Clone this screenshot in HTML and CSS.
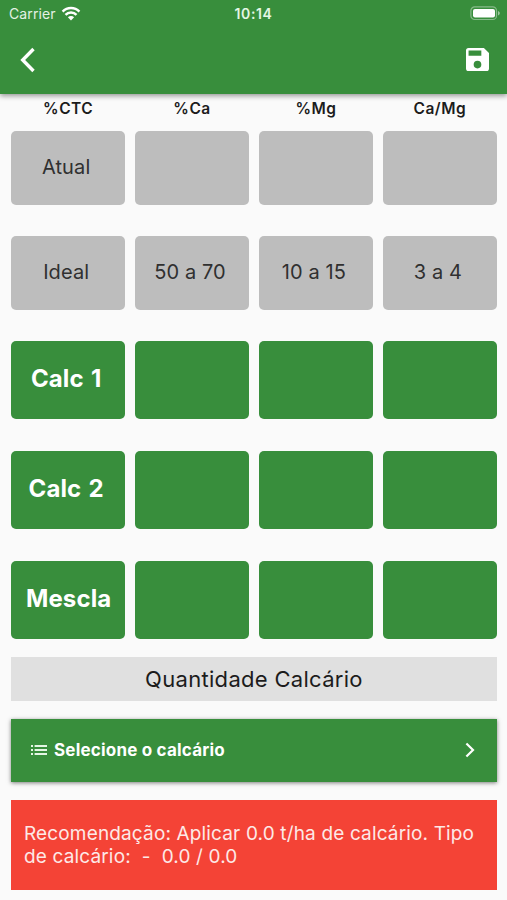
FILE: index.html
```html
<!DOCTYPE html>
<html lang="pt-BR">
<head>
    <meta charset="UTF-8">
    <meta name="viewport" content="width=device-width, initial-scale=1.0">
    <title>Calcário</title>
    <link rel="stylesheet" href="styles.css">
</head>
<body>
    <header>
        <div class="status-bar">
            <div class="carrier">
                <span>Carrier</span>
                <svg width="20" height="15" viewBox="0 0 20 15">
                    <path d="M1.6 5.6a11.8 11.8 0 0 1 16.8 0M4.5 8.8a7.7 7.7 0 0 1 11 0" fill="none" stroke="#fff" stroke-width="2.5"/>
                    <path d="M10 14.4l-3.1-3.1a4.4 4.4 0 0 1 6.2 0z" fill="#fff"/>
                </svg>
            </div>
            <div class="time">10:14</div>
            <svg class="battery" width="31" height="15" viewBox="0 0 31 15">
                <rect x=".9" y=".9" width="25.6" height="12.6" rx="3.8" fill="none" stroke="#fff" stroke-opacity=".4" stroke-width="1.2"/>
                <rect x="3" y="2.9" width="22" height="8.6" rx="2" fill="#fff"/>
                <path d="M28 5c2.4.8 2.4 3.6 0 4.4z" fill="#fff" fill-opacity=".5"/>
            </svg>
        </div>
        <div class="toolbar">
            <svg width="16" height="26" viewBox="0 0 16 26">
                <path d="M13.5 2L2.7 13l10.8 11" fill="none" stroke="#fff" stroke-width="3.4"/>
            </svg>
            <svg width="23" height="23" viewBox="3 3 18 18">
                <path d="M17 3H5a2 2 0 0 0-2 2v14a2 2 0 0 0 2 2h14a2 2 0 0 0 2-2V7l-4-4zm-5 16a3 3 0 1 1 0-6 3 3 0 0 1 0 6zm3-10H5V5h10v4z" fill="#fff"/>
            </svg>
        </div>
    </header>

    <main>
        <div class="row titles">
            <div>%CTC</div>
            <div>%Ca</div>
            <div>%Mg</div>
            <div>Ca/Mg</div>
        </div>
        <div class="row gray">
            <div class="card">Atual</div>
            <div class="card"></div>
            <div class="card"></div>
            <div class="card"></div>
        </div>
        <div class="row gray">
            <div class="card">Ideal</div>
            <div class="card">50 a 70</div>
            <div class="card">10 a 15</div>
            <div class="card">3 a 4</div>
        </div>
        <div class="row green">
            <div class="card">Calc 1</div>
            <div class="card"></div>
            <div class="card"></div>
            <div class="card"></div>
        </div>
        <div class="row green">
            <div class="card">Calc 2</div>
            <div class="card"></div>
            <div class="card"></div>
            <div class="card"></div>
        </div>
        <div class="row green">
            <div class="card mescla">Mescla</div>
            <div class="card"></div>
            <div class="card"></div>
            <div class="card"></div>
        </div>

        <div class="quantidade">Quantidade Calcário</div>

        <button class="select">
            <svg class="list" width="16" height="10" viewBox="0 0 16 10">
                <path d="M0 1h2M0 5h2M0 9h2M3.6 1H16M3.6 5H16M3.6 9H16" stroke="#e4f6e4" stroke-width="2"/>
            </svg>
            <span>Selecione o calcário</span>
            <svg width="10" height="16" viewBox="0 0 10 16">
                <path d="M1.4 1.5L8 8l-6.6 6.5" fill="none" stroke="#fff" stroke-width="2.2"/>
            </svg>
        </button>

        <div class="result">Recomendação: Aplicar 0.0 t/ha de calcário. Tipo de calcário:&nbsp; -&nbsp; 0.0 / 0.0</div>
    </main>
</body>
</html>
```

FILE: styles.css
```css
body {
    margin: 0;
    background: #fafafa;
    font-family: Inter, sans-serif;
    color: #1c1c1c;
}
svg {
    display: block;
    flex: none;
}
header {
    height: 94px;
    background: #388e3c;
    color: #fff;
    box-shadow: 0 2px 5px rgba(0, 0, 0, 0.4);
}
.status-bar {
    display: grid;
    grid-template-columns: 1fr auto 1fr;
    align-items: center;
    height: 27px;
    padding: 0 6px 0 9px;
    font-size: 14px;
}
.carrier {
    display: flex;
    align-items: center;
    gap: 5px;
    letter-spacing: 0.1px;
    color: #e4f1e4;
}
.time {
    margin-right: 3px;
    font-weight: 600;
    letter-spacing: 0.6px;
    color: #e4f6e4;
}
.battery {
    justify-self: end;
}
.toolbar {
    display: flex;
    justify-content: space-between;
    align-items: center;
    height: 65px;
    padding: 0 18px 0 20px;
}
main {
    padding: 0 10px 0 11px;
}
.row {
    display: grid;
    grid-template-columns: repeat(4, 1fr);
    gap: 9.6px;
    text-align: center;
}
.titles {
    height: 36.5px;
    line-height: 29px;
    font-size: 15.5px;
    font-weight: 600;
    letter-spacing: 0.5px;
}
.card {
    display: flex;
    justify-content: center;
    align-items: center;
    box-sizing: border-box;
    border-radius: 5px;
}
.gray {
    margin-bottom: 31px;
    font-size: 20px;
    letter-spacing: 0.1px;
    color: #303030;
}
.gray .card {
    height: 74.3px;
    padding: 0 4px 1px 0;
    background: #bdbdbd;
}
.green {
    margin-bottom: 31.7px;
    font-size: 24px;
    font-weight: 700;
    letter-spacing: 0.1px;
    word-spacing: 1.5px;
    color: #fff;
}
.green .card {
    height: 78.3px;
    padding: 0 4px 3px 0;
    background: #388e3c;
}
.green .mescla {
    padding-right: 0;
    padding-left: 1px;
}
.quantidade {
    height: 44px;
    margin: -14px 0 18px;
    line-height: 45px;
    background: #e0e0e0;
    font-size: 22px;
    letter-spacing: 0.3px;
    text-align: center;
}
.select {
    display: flex;
    align-items: center;
    width: 100%;
    height: 63px;
    margin: 0 0 18px;
    padding: 0 22px 2px 20px;
    border: none;
    background: #388e3c;
    box-shadow: 0 1px 4px rgba(0, 0, 0, 0.5);
    color: #fff;
    font-family: inherit;
    font-size: 17px;
    font-weight: 700;
    letter-spacing: 0.2px;
}
.select span {
    margin: 0 auto 0 7px;
}
.result {
    box-sizing: border-box;
    height: 90px;
    padding: 22px 13px;
    background: #f44336;
    color: #fde9e7;
    font-size: 19px;
    line-height: 23px;
    letter-spacing: 0.15px;
}
```
